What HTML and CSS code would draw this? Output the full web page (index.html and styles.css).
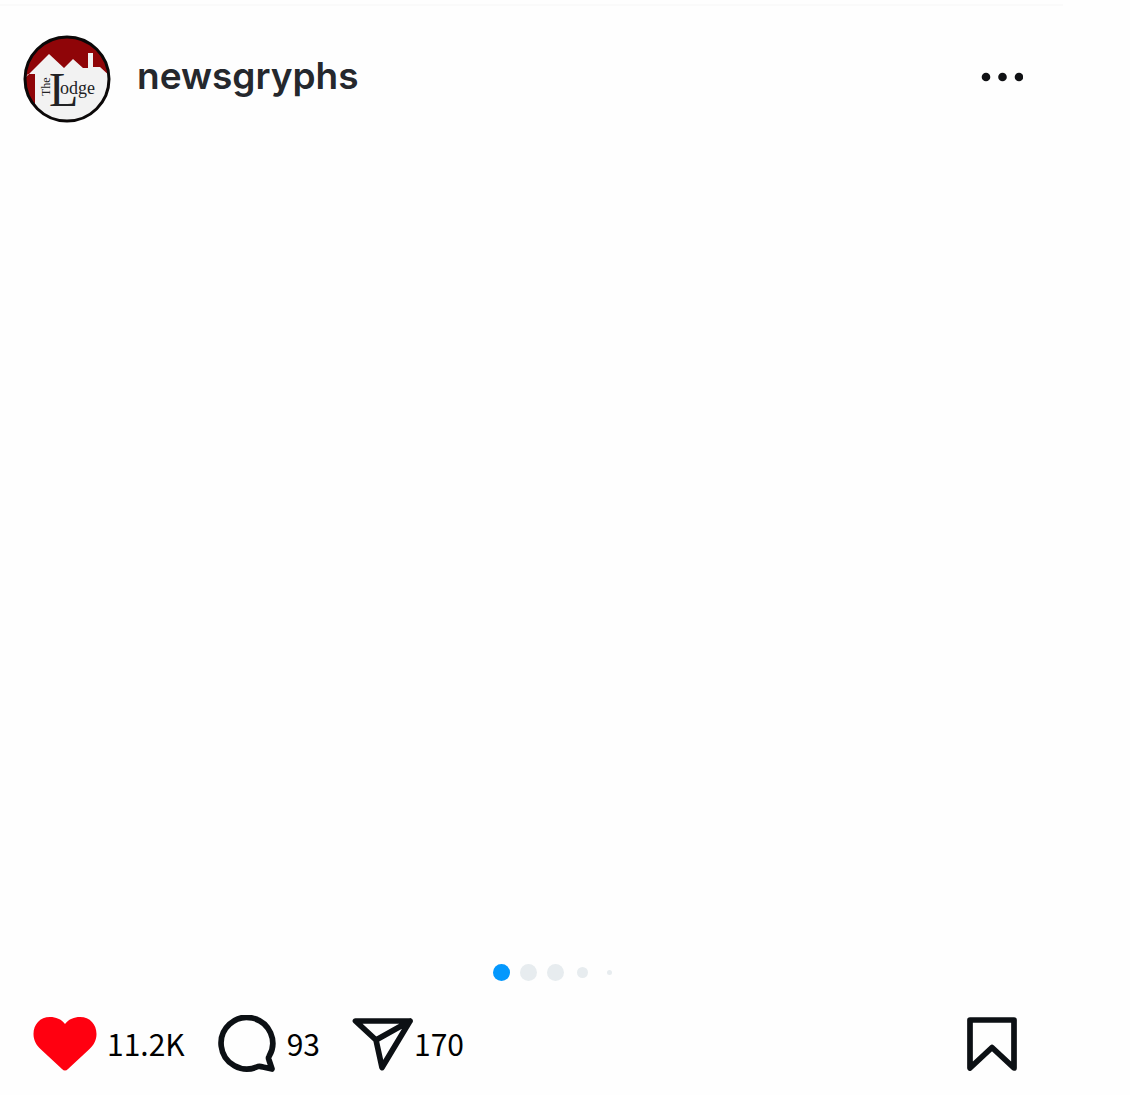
FILE: index.html
```html
<!DOCTYPE html>
<html lang="en">
<head>
<meta charset="utf-8">
<meta name="viewport" content="width=device-width, initial-scale=1">
<title>newsgryphs</title>
<link rel="stylesheet" href="styles.css">
</head>
<body>
<article class="post">
  <header class="post-header">
    <a class="account" href="#">
      <svg class="avatar" viewBox="0 0 88 88" role="img" aria-label="The Lodge">
        <defs><clipPath id="disc"><circle cx="44" cy="44" r="42"/></clipPath></defs>
        <g clip-path="url(#disc)">
          <rect width="88" height="88" fill="#8f0508"/>
          <path d="M0 45 8 37 26 19 41 33 50 24 60 33H65V18H70V32H77L88 42V88H12V39H5Z" fill="#f2f2f2"/>
        </g>
        <circle cx="44" cy="44" r="42" fill="none" stroke="#0b0808" stroke-width="3"/>
        <text class="logo-the" transform="translate(27 61) rotate(-90)">The</text>
        <text class="logo-name"><tspan class="logo-initial" x="26" y="71">L</tspan><tspan x="37" y="59">odge</tspan></text>
      </svg>
      <span class="username">newsgryphs</span>
    </a>
    <button class="icon-button" type="button" aria-label="More options">
      <svg width="42" height="10" viewBox="0 0 42 10" fill="#101114"><circle cx="5" cy="5" r="4.3"/><circle cx="21.500" cy="5" r="4.3"/><circle cx="38" cy="5" r="4.3"/></svg>
    </button>
  </header>
  <div class="media"></div>
  <div class="pager" aria-label="Slide 1">
    <span class="slot"><i class="dot current"></i></span>
    <span class="slot"><i class="dot"></i></span>
    <span class="slot"><i class="dot"></i></span>
    <span class="slot"><i class="dot small"></i></span>
    <span class="slot"><i class="dot tiny"></i></span>
  </div>
  <footer class="actions">
    <button class="action like" type="button" aria-label="Like, 11.2K">
      <svg width="64" height="56" viewBox="0 0 64 56"><path d="M32 8C36 3 41 1 47 1C57 1 63.500 8.500 63.500 18C63.500 24 61 29 56 33.500L35 53Q32 56 29 53L8 33.500C3 29 .5 24 .5 18C.5 8.500 7 1 17 1C23 1 28 3 32 8Z" fill="#ff0010"/></svg>
      <span class="count">11.2K</span>
    </button>
    <button class="action comment" type="button" aria-label="Comment, 93">
      <svg width="60" height="58" viewBox="0 0 60 58"><path d="M52 41.500A25.800 25.800 0 1 0 41 51.500Q43 51 46 52L55 54L52 45Q51 43 52 41.500Z" fill="none" stroke="#0c1014" stroke-width="5.700" stroke-linejoin="round"/></svg>
      <span class="count">93</span>
    </button>
    <button class="action share" type="button" aria-label="Share, 170">
      <svg width="62" height="54" viewBox="0 0 62 54"><path d="M3.500 4H58L30 50.500L24 23ZM24 23L58 4" fill="none" stroke="#0c1014" stroke-width="5.700" stroke-linejoin="round" stroke-linecap="round"/></svg>
      <span class="count">170</span>
    </button>
    <button class="icon-button save" type="button" aria-label="Save">
      <svg width="50" height="54" viewBox="0 0 50 54"><path d="M3 3H47V51L25 30.500L3 51Z" fill="none" stroke="#0c1014" stroke-width="5.700" stroke-linejoin="round"/></svg>
    </button>
  </footer>
</article>
</body>
</html>
```
FILE: styles.css
```css
* {
  box-sizing: border-box;
}

body {
  margin: 0;
  background: #fefefe;
  color: #0c1014;
}

.post {
  display: flex;
  flex-direction: column;
  min-height: 100vh;
  margin-right: 67px;
  padding: 4px 0 22px;
}

.post-header {
  display: flex;
  align-items: center;
  justify-content: space-between;
  padding: 29px 40px 12px 23px;
  border-top: 2px solid #fafafa;
}

.post-header .icon-button {
  padding-bottom: 4px;
}

.account {
  display: flex;
  align-items: center;
  gap: 26px;
  color: #25282d;
  text-decoration: none;
}

.avatar {
  width: 88px;
  height: 88px;
}

.logo-the,
.logo-name {
  font-family: "Liberation Serif", serif;
  fill: #222224;
}

.logo-the {
  font-size: 12px;
}

.logo-name {
  font-size: 18px;
}

.logo-initial {
  font-size: 48px;
}

.username {
  padding-bottom: 6px;
  font: 600 37px/48px Inter, sans-serif;
}

button {
  padding: 0;
  border: 0;
  background: none;
  color: inherit;
  cursor: pointer;
}

svg {
  display: block;
  flex: none;
}

.media {
  flex: 1;
  min-height: 320px;
}

.pager {
  display: flex;
  justify-content: center;
  gap: 10px;
  padding: 0 0 34px 48px;
}

.slot {
  display: grid;
  place-items: center;
  width: 17px;
  height: 17px;
}

.dot {
  width: 17px;
  height: 17px;
  border-radius: 50%;
  background: #e7ecef;
}

.current {
  background: #0498fd;
}

.small {
  width: 11px;
  height: 11px;
}

.tiny {
  width: 5px;
  height: 5px;
}

.actions {
  display: flex;
  align-items: center;
  gap: 32px;
  padding: 0 46px 0 33px;
}

.action {
  display: flex;
  align-items: center;
  gap: 10px;
}

.share {
  gap: 0;
}

.save {
  margin-left: auto;
}

.count {
  padding-bottom: 2px;
  font: 30px/44px "Noto Sans CJK SC", sans-serif;
  color: #000;
}
```
